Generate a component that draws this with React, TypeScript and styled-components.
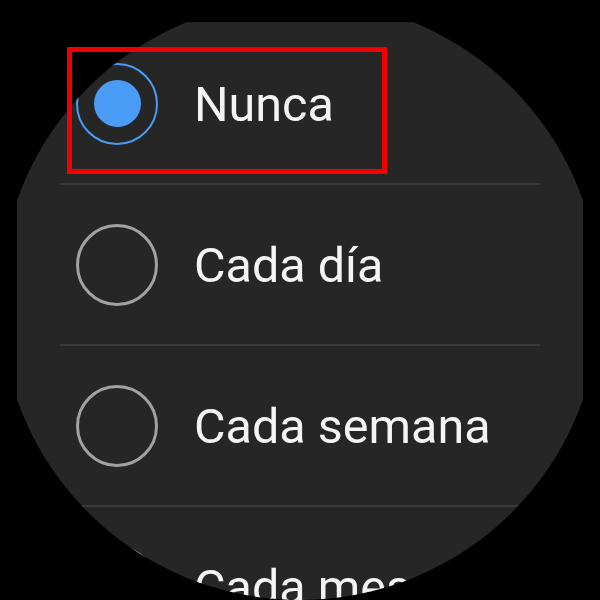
import React from "react";
import styled, { createGlobalStyle } from "styled-components";

const GlobalStyle = createGlobalStyle`
  html, body {
    margin: 0;
    padding: 0;
    background: #000;
  }
  * { box-sizing: border-box; }
`;

const Frame = styled.div`
  position: relative;
  width: 600px;
  height: 600px;
  background: #000;
  overflow: hidden;
`;

const Watch = styled.div`
  width: 600px;
  height: 600px;
  border-radius: 50%;
  overflow: hidden;
  background: #262626;
  clip-path: inset(22px 17px 0 17px);
`;

const List = styled.ul`
  list-style: none;
  margin: 0;
  padding: 24px 60px 0;
  display: flex;
  flex-direction: column;
`;

const Row = styled.li`
  display: flex;
  align-items: center;
  gap: 36px;
  height: 161px;
  flex: none;
  padding-left: 16px;
  border-bottom: 2px solid #3a3a3a;
`;

const Radio = styled.span<{ $checked?: boolean }>`
  flex: none;
  width: 82px;
  height: 82px;
  border-radius: 50%;
  border: ${(p) => (p.$checked ? "2.5px solid #4a9cf6" : "3px solid #a2a2a2")};
  display: grid;
  place-items: center;
`;

const Dot = styled.span`
  width: 47px;
  height: 47px;
  border-radius: 50%;
  background: #4a9cf6;
`;

const Label = styled.span`
  font-family: Roboto, "Noto Sans", "Liberation Sans", sans-serif;
  font-size: 48.5px;
  line-height: 1;
  color: #f4f4f4;
  white-space: nowrap;
  padding-top: 4px;
`;

const Highlight = styled.div`
  position: absolute;
  left: 67px;
  top: 47px;
  width: 320px;
  height: 127px;
  border: 5px solid #f00000;
  pointer-events: none;
`;

const options = ["Nunca", "Cada día", "Cada semana", "Cada mes"];

export default function App() {
  return (
    <>
      <GlobalStyle />
      <Frame>
        <Watch>
          <List>
            {options.map((o, i) => (
              <Row key={o}>
                <Radio $checked={i === 0}>{i === 0 && <Dot />}</Radio>
                <Label>{o}</Label>
              </Row>
            ))}
          </List>
        </Watch>
        <Highlight />
      </Frame>
    </>
  );
}
